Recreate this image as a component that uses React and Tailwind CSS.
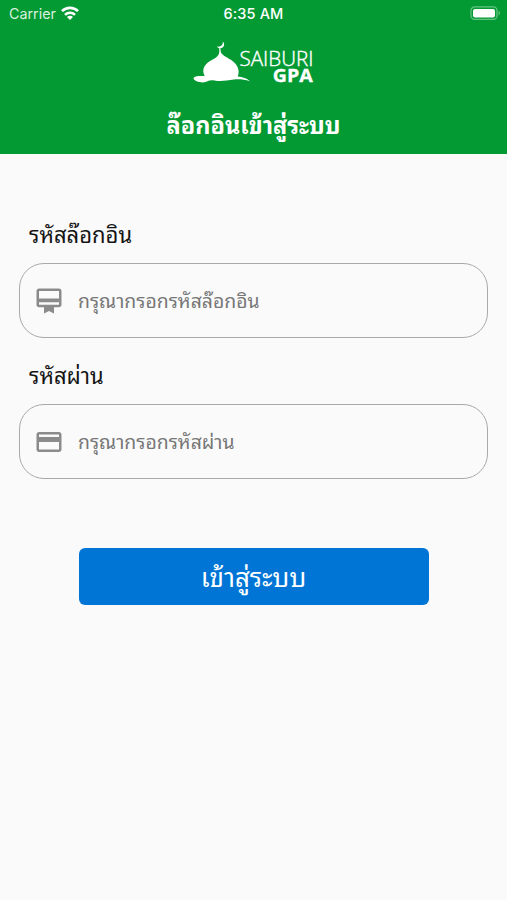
import { MdCardMembership, MdPayment } from "react-icons/md";

function StatusBar() {
  return (
    <div className="grid h-[27px] grid-cols-3 items-center pl-[9px] pr-[6px] font-['Inter','Liberation_Sans',sans-serif] text-[14px] text-white">
      <div className="flex items-center gap-[5px]">
        <span className="text-[14.3px] text-[#d9f0df]">Carrier</span>
        <svg width="18" height="14" viewBox="0 0 18 14" fill="none" stroke="#fff" strokeWidth="2.6" className="-mt-[2px]">
          <path d="M1 5.2a11.3 11.3 0 0 1 16 0" />
          <path d="M4 8.8a7 7 0 0 1 10 0" />
          <path d="M9 13.9 6 11a4.2 4.2 0 0 1 6 0z" fill="#fff" stroke="none" />
        </svg>
      </div>
      <span className="-ml-[3px] text-center text-[14.5px] font-medium tracking-[0.15px]">6:35 AM</span>
      <svg className="-mt-[2px] justify-self-end" width="31" height="14" viewBox="0 0 31 14">
        <rect x="1" y="0.9" width="26" height="12.5" rx="3.6" fill="none" stroke="#fff" strokeOpacity="0.4" strokeWidth="1.2" />
        <rect x="3" y="2.9" width="22" height="8.5" rx="2" fill="#fff" />
        <path d="M28.6 4.8c1.6.6 1.6 4.1 0 4.7z" fill="#fff" fillOpacity="0.45" />
      </svg>
    </div>
  );
}

function Logo() {
  return (
    <svg width="124" height="46" viewBox="0 0 124 46" fill="#fff" className="block">
      <path d="M30.8.6c2.6 2.5 1.3 6.9-2.9 6.7-1.4-.1-2.4-.7-2.9-1.8 3.5.7 6.2-1.2 5.8-4.9z" />
      <path d="M27.3 7h1l.5 4c1.5 4 7.5 5.6 12.3 9.4 4.8 4 7 9.500 4.600 15.200 5 .3 9.200 1.800 12.300 4.700-6-1.700-11-2.300-16-1.700-8 1-13 2.300-19.500.9-2.500-.6-5-.5-6.500.5-2 1.300-5 1.800-8.500 1.100-4-.9-7-3.100-5.500-4.700 1.500-1.500 5.500-1.600 10.700-1.400-3.700-6.500.3-12.300 7-15.900 4-2.200 7.100-4 7.600-8.100z" />
      <text x="47.5" y="24.5" fontFamily="Open Sans, sans-serif" fontSize="20.5" fontWeight="300" stroke="#fff" strokeWidth="0.4" textLength="74" lengthAdjust="spacingAndGlyphs">SAIBURI</text>
      <text x="80.8" y="40.5" fontFamily="Open Sans, sans-serif" fontSize="18.5" fontWeight="700" stroke="#fff" strokeWidth="0.3" textLength="40" lengthAdjust="spacingAndGlyphs">GPA</text>
    </svg>
  );
}

function Field({ id, label, placeholder, type, icon: Icon }) {
  return (
    <div>
      <label htmlFor={id} className="ml-[10px] block h-[48px] text-[22px] leading-[36px] text-[#151515]">
        {label}
      </label>
      <div className="flex h-[75px] items-center gap-[14px] rounded-[25px] border-[1.5px] border-[#a9a9a9] pl-[14px] pr-4">
        <Icon className="size-[30px] shrink-0 text-[#8b8b8b]" />
        <input
          id={id}
          type={type}
          placeholder={placeholder}
          className="mb-[3px] h-[40px] min-w-0 flex-1 bg-transparent text-[19.4px] outline-none placeholder:text-[#777777]"
        />
      </div>
    </div>
  );
}

export default function App() {
  return (
    <div className="flex min-h-[900px] w-full flex-col bg-[#fafafa] font-['Noto_Sans_Thai_Looped','Loma','Noto_Sans',sans-serif]">
      <header className="h-[154px] bg-[#039a34]">
        <StatusBar />
        <div className="flex h-[73px] justify-center pt-[14px]">
          <Logo />
        </div>
        <h1 className="text-center text-[23.5px] font-bold leading-[47px] text-white">ล๊อกอินเข้าสู่ระบบ</h1>
      </header>
      <form className="flex flex-col gap-[18px] px-[19px] pt-[61px]" onSubmit={(e) => e.preventDefault()}>
        <Field id="login" label="รหัสล๊อกอิน" placeholder="กรุณากรอกรหัสล๊อกอิน" type="text" icon={MdCardMembership} />
        <Field id="password" label="รหัสผ่าน" placeholder="กรุณากรอกรหัสผ่าน" type="password" icon={MdPayment} />
        <button type="submit" className="mx-auto mt-[51px] h-[57px] w-[350px] rounded-[6px] bg-[#0075d6] pb-[2px] text-[26px] leading-[55px] text-white">
          เข้าสู่ระบบ
        </button>
      </form>
    </div>
  );
}
